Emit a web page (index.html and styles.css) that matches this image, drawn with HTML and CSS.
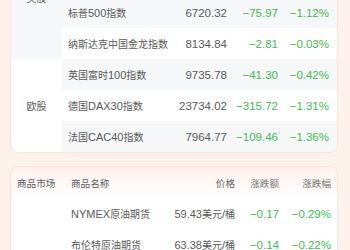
FILE: index.html
```html
<!DOCTYPE html>
<html>
<head>
<meta charset="utf-8">
<link rel="stylesheet" href="styles.css">
</head>
<body>
<div class="page">
  <section class="card card-index">
    <div class="grid grid-index">
      <div class="hd mk">市场</div>
      <div class="hd nm">指数名称</div>
      <div class="hd num">最新价</div>
      <div class="hd num">涨跌额</div>
      <div class="hd num last">涨跌幅</div>

      <div class="mk shade span4">美股</div>
      <div class="nm shade">道琼斯指数</div>
      <div class="num shade">42140.43</div>
      <div class="num down shade">−485.84</div>
      <div class="num down shade last">−1.14%</div>

      <div class="nm">纳斯达克指数</div>
      <div class="num">20273.46</div>
      <div class="num down">−272.59</div>
      <div class="num down last">−1.33%</div>

      <div class="nm shade">标普<span class="lat">500</span>指数</div>
      <div class="num shade">6720.32</div>
      <div class="num down shade">−75.97</div>
      <div class="num down shade last">−1.12%</div>

      <div class="nm">纳斯达克中国金龙指数</div>
      <div class="num">8134.84</div>
      <div class="num down">−2.81</div>
      <div class="num down last">−0.03%</div>

      <div class="mk span3">欧股</div>
      <div class="nm shade">英国富时<span class="lat">100</span>指数</div>
      <div class="num shade">9735.78</div>
      <div class="num down shade">−41.30</div>
      <div class="num down shade last">−0.42%</div>

      <div class="nm">德国<span class="lat">DAX30</span>指数</div>
      <div class="num">23734.02</div>
      <div class="num down">−315.72</div>
      <div class="num down last">−1.31%</div>

      <div class="nm shade">法国<span class="lat">CAC40</span>指数</div>
      <div class="num shade">7964.77</div>
      <div class="num down shade">−109.46</div>
      <div class="num down shade last">−1.36%</div>
    </div>
  </section>

  <section class="card card-goods">
    <div class="grid grid-goods">
      <div class="hd mk">商品市场</div>
      <div class="hd nm">商品名称</div>
      <div class="hd num">价格</div>
      <div class="hd num light">涨跌额</div>
      <div class="hd num light last">涨跌幅</div>

      <div class="mk span2"></div>
      <div class="nm shade"><span class="lat">NYMEX</span>原油期货</div>
      <div class="num unit shade"><span class="lat">59.43</span>美元<span class="lat">/</span>桶</div>
      <div class="num down shade">−0.17</div>
      <div class="num down shade last">−0.29%</div>

      <div class="nm">布伦特原油期货</div>
      <div class="num unit"><span class="lat">63.38</span>美元<span class="lat">/</span>桶</div>
      <div class="num down">−0.14</div>
      <div class="num down last">−0.22%</div>
    </div>
  </section>
</div>
</body>
</html>
```
FILE: styles.css
```css
html, body {
  margin: 0;
  padding: 0;
  background: #fdf1eb;
  font-family: "Liberation Sans", "Noto Sans CJK SC", sans-serif;
  font-size: 10px;
  color: #5a5a5a;
}
.page {
  margin-top: -97px;
  padding: 0 12px 0 10px;
  display: flex;
  flex-direction: column;
  gap: 13px;
}
.card {
  background: #fff;
  border: 1px solid #fbe2dd;
  border-radius: 8px;
  overflow: hidden;
  min-width: 0;
}
.grid {
  display: grid;
  grid-auto-rows: 31px;
}
.grid-index {
  grid-template-columns: 51px minmax(0, 1fr) 60px 51px 59px;
}
.grid-goods {
  grid-template-columns: 52px minmax(0, 1fr) 60px 44px 58px;
}
.grid > div {
  display: flex;
  align-items: center;
  white-space: nowrap;
  min-width: 0;
}
.lat { font-size: 11px; }
.grid > .hd {
  height: 32px;
  color: #5e5e5e;
  align-self: start;
  font-size: 9.6px;
}
.card-goods .grid { background: linear-gradient(#fff1ed 0, #fff 32px); }
.card-goods .grid > div:not(.hd) { background-color: #fff; }
.card-goods .grid > .shade { background-color: #f6f7f9; }
.grid > .hd.light { color: #777; }
.mk {
  justify-content: center;
  font-size: 10px;
}
.nm {
  padding-left: 6px;
}
.grid-goods .nm { padding-left: 8px; }
.grid-goods .mk { justify-content: flex-start; padding-left: 6px; }
.num {
  justify-content: flex-end;
  font-size: 11.5px;
}
.grid > .unit { font-size: 10px; }
.grid-index .last { padding-right: 8px; }
.grid-goods .last { padding-right: 6px; }
.down { color: #3dbb4f; }
.shade { background: #f6f7f9; }
.span4 { grid-row: span 4; }
.span3 { grid-row: span 3; }
.span2 { grid-row: span 2; }
```
